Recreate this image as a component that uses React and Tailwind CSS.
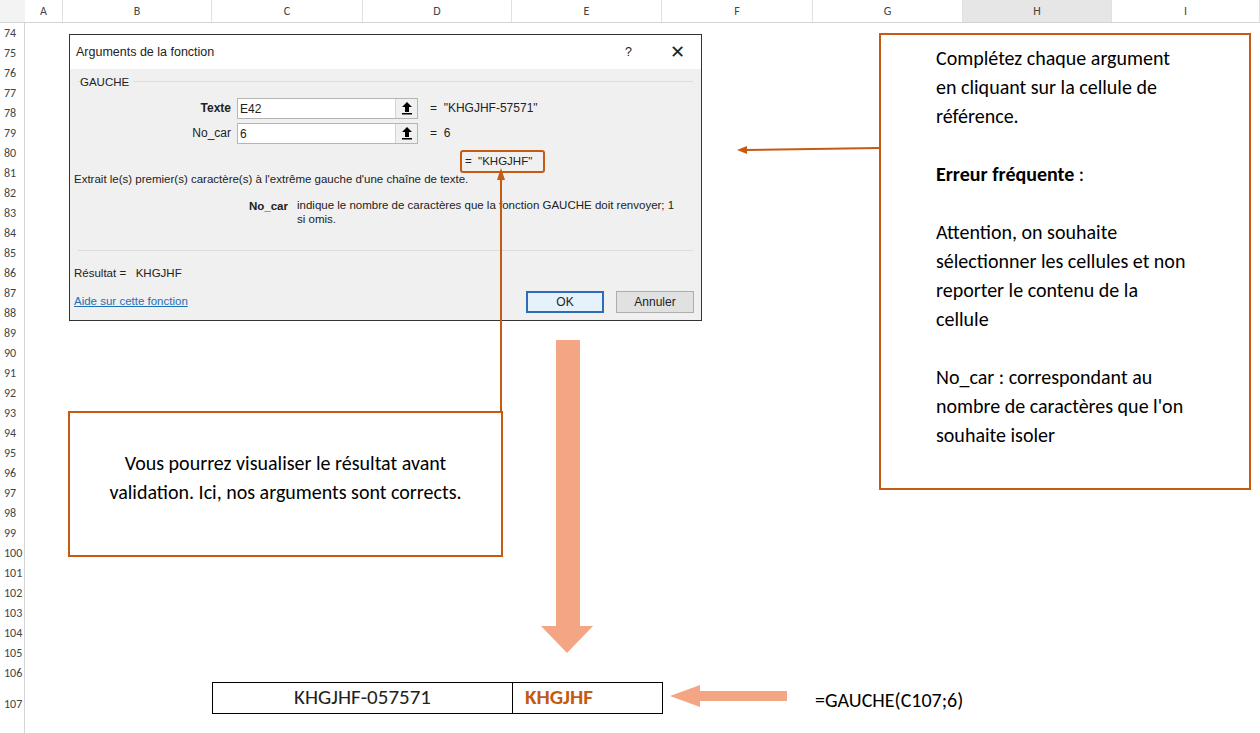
import React from "react";

const cols = [
  ["A", 38], ["B", 149], ["C", 151], ["D", 149], ["E", 150],
  ["F", 151], ["G", 150], ["H", 149], ["I", 148],
];
const rows = Array.from({ length: 33 }, (_, i) => 74 + i);

const UpBtn = () => (
  <div className="w-[22px] h-full border-l border-gray-300 bg-[#f0f0f0] flex items-center justify-center">
    <svg width="12" height="14" viewBox="0 0 12 14">
      <path d="M6 1 L1 6 H4 V11 H8 V6 H11 Z" fill="#000" />
      <rect x="1" y="12" width="10" height="1.5" fill="#000" />
    </svg>
  </div>
);

export default function App() {
  return (
    <div className="relative w-[1260px] h-[733px] bg-white overflow-hidden text-[#222]" style={{ fontFamily: "Calibri, Carlito, 'Liberation Sans', sans-serif" }}>
      {/* column header */}
      <div className="flex h-[23px] border-b border-[#d4d4d4] bg-white">
        <div className="w-[25px] bg-[#f3f3f3]" />
        {cols.map(([c, w]) => (
          <div key={c} style={{ width: w }} className={`flex items-center justify-center text-[12px] text-[#444] border-r border-[#e1e1e1] ${c === "H" ? "bg-[#e6e6e6]" : ""}`}>{c}</div>
        ))}
      </div>
      {/* row header */}
      <div className="absolute left-0 top-[23px] w-[25px] border-r border-[#d4d4d4] h-[710px]">
        {rows.map((r) => (
          <div key={r} className="h-[20px] flex items-center text-[12px] text-[#444] pl-[4px]">{r}</div>
        ))}
        <div className="h-[42px] flex items-center text-[12px] text-[#444] pl-[4px]">107</div>
      </div>

      {/* dialog */}
      <div className="absolute left-[69px] top-[34px] w-[633px] h-[287px] border border-[#333] bg-[#f0f0f0] text-[12px]" style={{ fontFamily: "'Liberation Sans', Arial, sans-serif" }}>
        <div className="h-[34px] bg-white flex items-center px-[6px] text-[12.5px]">
          <span className="flex-1">Arguments de la fonction</span>
          <span className="mr-[38px]">?</span>
          <span className="text-[18px] mr-[10px] font-light">✕</span>
        </div>
        <div className="mx-[8px] mt-[12px] border-t border-[#dcdcdc] relative">
          <span className="absolute -top-[8px] left-[2px] bg-[#f0f0f0] pr-1 text-[11.5px]">GAUCHE</span>
        </div>
        <div className="mt-[15px] flex flex-col gap-[3px]">
          {[["Texte", "E42", "\"KHGJHF-57571\"", true], ["No_car", "6", "6", false]].map(([l, v, r, b]) => (
            <div key={l} className="flex items-center h-[22px]">
              <span className={`w-[167px] text-right pr-[6px] ${b ? "font-bold" : ""}`}>{l}</span>
              <div className="w-[181px] h-[21px] bg-white border border-[#b5b5b5] flex">
                <span className="flex-1 pl-[2px] leading-[20px]">{v}</span>
                <UpBtn />
              </div>
              <span className="ml-[12px]">=&nbsp;&nbsp;{r}</span>
            </div>
          ))}
        </div>
        <div className="ml-[390px] mt-[6px] w-[85px] h-[23px] border-2 border-[#c55a11] rounded-[3px] flex items-center pl-[3px] text-[11.5px]">=&nbsp;&nbsp;"KHGJHF"</div>
        <div className="pl-[4px] text-[11.5px] -mt-[2px]">Extrait le(s) premier(s) caractère(s) à l'extrême gauche d'une chaîne de texte.</div>
        <div className="flex mt-[10px] text-[11.5px]">
          <span className="w-[218px] text-right font-bold">No_car</span>
          <span className="ml-[9px] w-[385px] leading-[14px]">indique le nombre de caractères que la fonction GAUCHE doit renvoyer; 1 si omis.</span>
        </div>
        <div className="mx-[8px] mt-[24px] border-t border-[#dcdcdc]" />
        <div className="pl-[4px] mt-[14px] text-[11.5px]">Résultat =&nbsp;&nbsp;&nbsp;KHGJHF</div>
        <div className="flex items-center mt-[8px] px-[4px]">
          <span className="flex-1 text-[#1f6fb5] underline text-[11.5px]">Aide sur cette fonction</span>
          <div className="w-[78px] h-[22px] border-2 border-[#2e6cb5] bg-[#e5f1fb] flex items-center justify-center mr-[12px]">OK</div>
          <div className="w-[78px] h-[22px] border border-[#adadad] bg-[#e1e1e1] flex items-center justify-center mr-[3px]">Annuler</div>
        </div>
      </div>

      {/* right callout */}
      <div className="absolute left-[879px] top-[33px] w-[372px] h-[457px] border-2 border-[#c55a11] bg-white pl-[55px] pr-[58px] pt-[9px] text-[20px] leading-[29px] text-black">
        <p>Complétez chaque argument en cliquant sur la cellule de référence.</p>
        <p className="mt-[29px]"><b>Erreur fréquente</b> :</p>
        <p className="mt-[29px]">Attention, on souhaite sélectionner les cellules et non reporter le contenu de la cellule</p>
        <p className="mt-[29px]">No_car : correspondant au nombre de caractères que l'on souhaite isoler</p>
      </div>

      {/* left callout */}
      <div className="absolute left-[68px] top-[411px] w-[435px] h-[146px] border-2 border-[#c55a11] bg-white flex items-center justify-center text-center px-[22px] pb-[12px] text-[20px] leading-[29px] text-black">
        <p className="w-[380px]">Vous pourrez visualiser le résultat avant validation. Ici, nos arguments sont corrects.</p>
      </div>

      {/* arrows */}
      <svg className="absolute left-0 top-0" width="1260" height="733">
        <line x1="879" y1="148" x2="745" y2="150" stroke="#c55a11" strokeWidth="2" />
        <path d="M737 150 L747 146 L747 154 Z" fill="#c55a11" />
        <line x1="501" y1="411" x2="501" y2="178" stroke="#c55a11" strokeWidth="2" />
        <path d="M501 168 L497 180 L505 180 Z" fill="#c55a11" />
        <path d="M556 340 H580 V626 H593 L567 653 L541 626 H556 Z" fill="#f4a584" />
        <path d="M787 691 H700 V685 L670 696 L700 707 V701 H787 Z" fill="#f4a584" />
      </svg>

      {/* cells */}
      <div className="absolute left-[212px] top-[682px] w-[451px] h-[32px] border border-black flex bg-white text-[21px]">
        <div className="w-[300px] border-r border-black flex items-center justify-center">KHGJHF-057571</div>
        <div className="flex-1 flex items-center pl-[12px] font-bold text-[#c55a11]">KHGJHF</div>
      </div>
      <div className="absolute left-[815px] top-[685px] text-[20px] text-black">=GAUCHE(C107;6)</div>
    </div>
  );
}
